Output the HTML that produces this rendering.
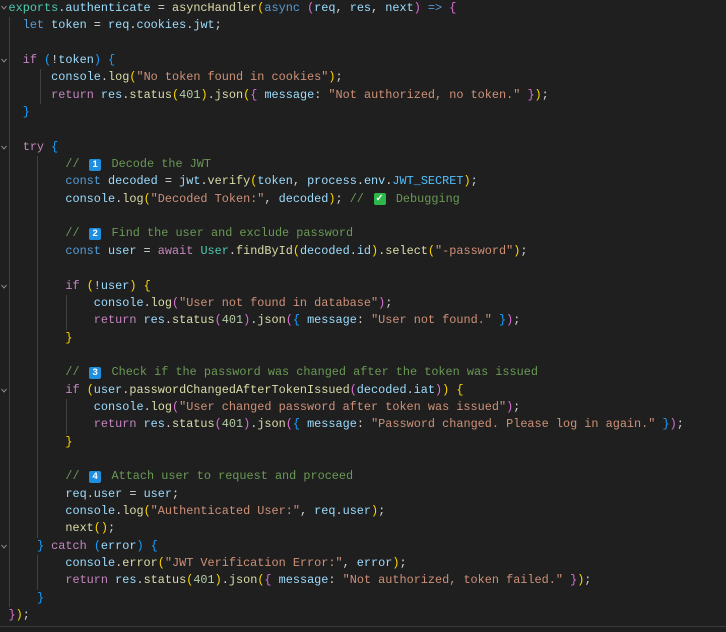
<!DOCTYPE html>
<html><head><meta charset="utf-8"><style>
html,body{margin:0;padding:0;background:#1f1f1f;}
body{width:726px;height:632px;position:relative;overflow:hidden;font-family:"Liberation Mono",monospace;font-size:11.85px;color:#d4d4d4;}
#code{position:absolute;left:8.5px;top:0;line-height:17.35px;}
.l{height:17.35px;white-space:pre;}
.v{color:#9cdcfe}.f{color:#dcdcaa}.k{color:#569cd6}.c{color:#c586c0}.s{color:#ce9178}.n{color:#b5cea8}.m{color:#6a9955}.t{color:#4ec9b0}.K{color:#4fc1ff}
.y{color:#ffd700}.p{color:#da70d6}.b{color:#179fff}
.kc{display:inline-block;width:17.7px;vertical-align:top;position:relative;height:17px;}
.kc i{position:absolute;left:2.5px;top:2.5px;width:12px;height:12px;background:#1e8fe0;border-radius:2px;color:#fff;font-style:normal;font-weight:bold;font-size:9.5px;line-height:12px;text-align:center;font-family:"Liberation Sans",sans-serif;}
.kc i.g{background:#2eb84b;}
.g1{position:absolute;width:1px;background:#404040;}
.fold{position:absolute;left:1px;width:6px;height:5px;}
</style></head><body>
<div class="g1" style="left:9px;top:17px;height:590px"></div>
<div class="g1" style="left:40px;top:69px;height:35px"></div>
<div class="g1" style="left:37px;top:156px;height:382px"></div>
<div class="g1" style="left:37px;top:555px;height:35px"></div>
<div class="g1" style="left:66px;top:295px;height:35px"></div>
<div class="g1" style="left:66px;top:399px;height:35px"></div>
<svg class="fold" style="top:5px" viewBox="0 0 6 5"><polyline points="0.5,1 3,4 5.5,1" fill="none" stroke="#8a8a8a" stroke-width="1"/></svg>
<svg class="fold" style="top:58px" viewBox="0 0 6 5"><polyline points="0.5,1 3,4 5.5,1" fill="none" stroke="#8a8a8a" stroke-width="1"/></svg>
<svg class="fold" style="top:145px" viewBox="0 0 6 5"><polyline points="0.5,1 3,4 5.5,1" fill="none" stroke="#8a8a8a" stroke-width="1"/></svg>
<svg class="fold" style="top:284px" viewBox="0 0 6 5"><polyline points="0.5,1 3,4 5.5,1" fill="none" stroke="#8a8a8a" stroke-width="1"/></svg>
<svg class="fold" style="top:388px" viewBox="0 0 6 5"><polyline points="0.5,1 3,4 5.5,1" fill="none" stroke="#8a8a8a" stroke-width="1"/></svg>
<svg class="fold" style="top:544px" viewBox="0 0 6 5"><polyline points="0.5,1 3,4 5.5,1" fill="none" stroke="#8a8a8a" stroke-width="1"/></svg>
<div style="position:absolute;left:0;top:626px;width:726px;height:1px;background:#3a3a3a"></div>
<div id="code">
<div class="l"><span class="t">exports</span>.<span class="v">authenticate</span> = <span class="f">asyncHandler</span><span class="y">(</span><span class="k">async</span> <span class="p">(</span><span class="v">req</span>, <span class="v">res</span>, <span class="v">next</span><span class="p">)</span> <span class="k">=&gt;</span> <span class="p">{</span></div>
<div class="l">  <span class="k">let</span> <span class="v">token</span> = <span class="v">req</span>.<span class="v">cookies</span>.<span class="v">jwt</span>;</div>
<div class="l"> </div>
<div class="l">  <span class="c">if</span> <span class="b">(</span>!<span class="v">token</span><span class="b">)</span> <span class="b">{</span></div>
<div class="l">      <span class="v">console</span>.<span class="f">log</span><span class="y">(</span><span class="s">"No token found in cookies"</span><span class="y">)</span>;</div>
<div class="l">      <span class="c">return</span> <span class="v">res</span>.<span class="f">status</span><span class="y">(</span><span class="n">401</span><span class="y">)</span>.<span class="f">json</span><span class="y">(</span><span class="p">{</span> <span class="v">message</span>: <span class="s">"Not authorized, no token."</span> <span class="p">}</span><span class="y">)</span>;</div>
<div class="l">  <span class="b">}</span></div>
<div class="l"> </div>
<div class="l">  <span class="c">try</span> <span class="b">{</span></div>
<div class="l">        <span class="m">// <span class="kc"><i>1</i></span> Decode the JWT</span></div>
<div class="l">        <span class="k">const</span> <span class="v">decoded</span> = <span class="v">jwt</span>.<span class="f">verify</span><span class="y">(</span><span class="v">token</span>, <span class="v">process</span>.<span class="v">env</span>.<span class="K">JWT_SECRET</span><span class="y">)</span>;</div>
<div class="l">        <span class="v">console</span>.<span class="f">log</span><span class="y">(</span><span class="s">"Decoded Token:"</span>, <span class="v">decoded</span><span class="y">)</span>; <span class="m">// <span class="kc"><i class="g">✓</i></span> Debugging</span></div>
<div class="l"> </div>
<div class="l">        <span class="m">// <span class="kc"><i>2</i></span> Find the user and exclude password</span></div>
<div class="l">        <span class="k">const</span> <span class="v">user</span> = <span class="c">await</span> <span class="t">User</span>.<span class="f">findById</span><span class="y">(</span><span class="v">decoded</span>.<span class="v">id</span><span class="y">)</span>.<span class="f">select</span><span class="y">(</span><span class="s">"-password"</span><span class="y">)</span>;</div>
<div class="l"> </div>
<div class="l">        <span class="c">if</span> <span class="y">(</span>!<span class="v">user</span><span class="y">)</span> <span class="y">{</span></div>
<div class="l">            <span class="v">console</span>.<span class="f">log</span><span class="p">(</span><span class="s">"User not found in database"</span><span class="p">)</span>;</div>
<div class="l">            <span class="c">return</span> <span class="v">res</span>.<span class="f">status</span><span class="p">(</span><span class="n">401</span><span class="p">)</span>.<span class="f">json</span><span class="p">(</span><span class="b">{</span> <span class="v">message</span>: <span class="s">"User not found."</span> <span class="b">}</span><span class="p">)</span>;</div>
<div class="l">        <span class="y">}</span></div>
<div class="l"> </div>
<div class="l">        <span class="m">// <span class="kc"><i>3</i></span> Check if the password was changed after the token was issued</span></div>
<div class="l">        <span class="c">if</span> <span class="y">(</span><span class="v">user</span>.<span class="f">passwordChangedAfterTokenIssued</span><span class="p">(</span><span class="v">decoded</span>.<span class="v">iat</span><span class="p">)</span><span class="y">)</span> <span class="y">{</span></div>
<div class="l">            <span class="v">console</span>.<span class="f">log</span><span class="p">(</span><span class="s">"User changed password after token was issued"</span><span class="p">)</span>;</div>
<div class="l">            <span class="c">return</span> <span class="v">res</span>.<span class="f">status</span><span class="p">(</span><span class="n">401</span><span class="p">)</span>.<span class="f">json</span><span class="p">(</span><span class="b">{</span> <span class="v">message</span>: <span class="s">"Password changed. Please log in again."</span> <span class="b">}</span><span class="p">)</span>;</div>
<div class="l">        <span class="y">}</span></div>
<div class="l"> </div>
<div class="l">        <span class="m">// <span class="kc"><i>4</i></span> Attach user to request and proceed</span></div>
<div class="l">        <span class="v">req</span>.<span class="v">user</span> = <span class="v">user</span>;</div>
<div class="l">        <span class="v">console</span>.<span class="f">log</span><span class="y">(</span><span class="s">"Authenticated User:"</span>, <span class="v">req</span>.<span class="v">user</span><span class="y">)</span>;</div>
<div class="l">        <span class="f">next</span><span class="y">()</span>;</div>
<div class="l">    <span class="b">}</span> <span class="c">catch</span> <span class="b">(</span><span class="v">error</span><span class="b">)</span> <span class="b">{</span></div>
<div class="l">        <span class="v">console</span>.<span class="f">error</span><span class="y">(</span><span class="s">"JWT Verification Error:"</span>, <span class="v">error</span><span class="y">)</span>;</div>
<div class="l">        <span class="c">return</span> <span class="v">res</span>.<span class="f">status</span><span class="y">(</span><span class="n">401</span><span class="y">)</span>.<span class="f">json</span><span class="y">(</span><span class="p">{</span> <span class="v">message</span>: <span class="s">"Not authorized, token failed."</span> <span class="p">}</span><span class="y">)</span>;</div>
<div class="l">    <span class="b">}</span></div>
<div class="l"><span class="p">}</span><span class="y">)</span>;</div>
</div>
</body></html>
